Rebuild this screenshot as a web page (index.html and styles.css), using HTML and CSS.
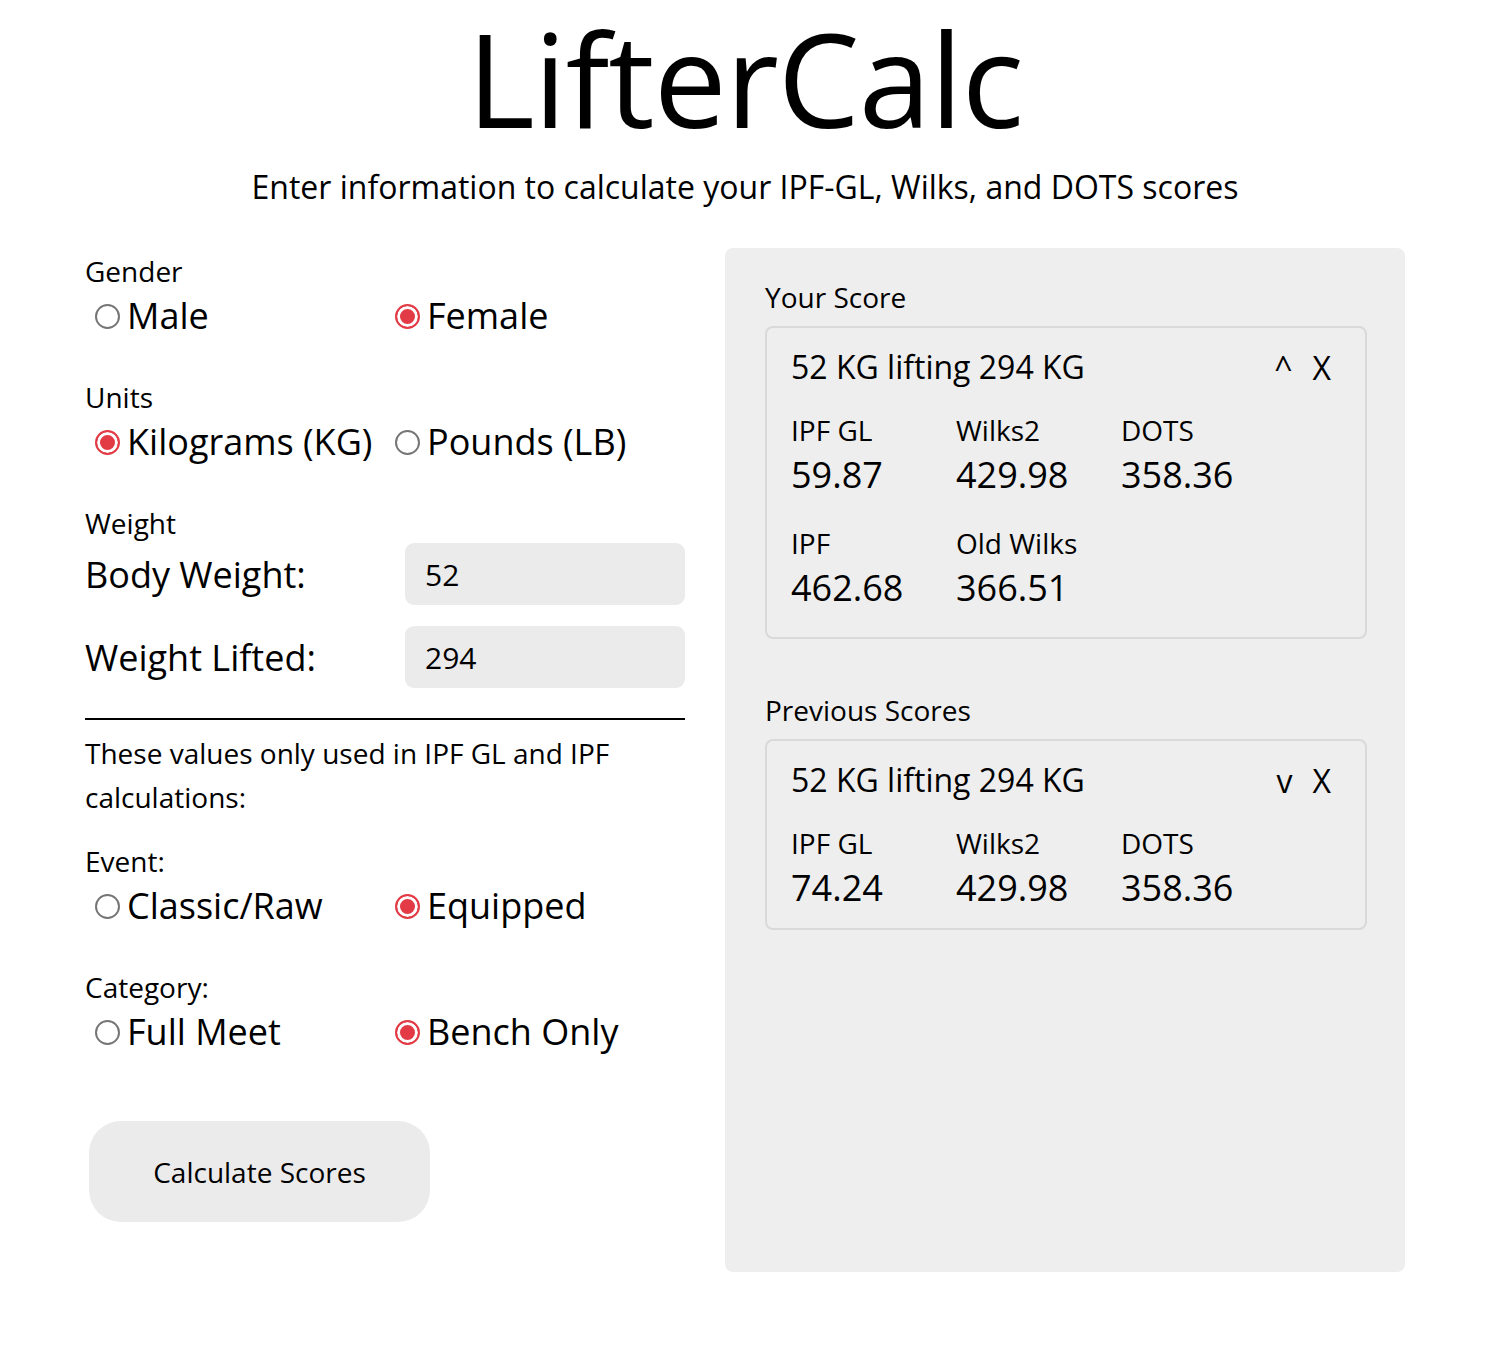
FILE: index.html
```html
<!DOCTYPE html>
<html>
<head>
<meta charset="utf-8">
<title>LifterCalc</title>
<link rel="stylesheet" href="styles.css">
</head>
<body>
<header class="header">
  <h1 class="title">LifterCalc</h1>
  <p class="subtitle">Enter information to calculate your IPF-GL, Wilks, and DOTS scores</p>
</header>
<main class="main">
  <form class="form">
    <div class="group">
      <div class="label">Gender</div>
      <div class="options">
        <label class="opt"><input type="radio" name="g"><span>Male</span></label>
        <label class="opt"><input type="radio" name="g" checked><span>Female</span></label>
      </div>
    </div>
    <div class="group">
      <div class="label">Units</div>
      <div class="options">
        <label class="opt"><input type="radio" name="u" checked><span>Kilograms (KG)</span></label>
        <label class="opt"><input type="radio" name="u"><span>Pounds (LB)</span></label>
      </div>
    </div>
    <div class="group weight">
      <div class="label">Weight</div>
      <div class="field">
        <span class="field-label">Body Weight:</span>
        <input class="input" type="text" value="52">
      </div>
      <div class="field">
        <span class="field-label">Weight Lifted:</span>
        <input class="input" type="text" value="294">
      </div>
    </div>
    <hr class="rule">
    <p class="note">These values only used in IPF GL and IPF calculations:</p>
    <div class="group">
      <div class="label">Event:</div>
      <div class="options">
        <label class="opt"><input type="radio" name="e"><span>Classic/Raw</span></label>
        <label class="opt"><input type="radio" name="e" checked><span>Equipped</span></label>
      </div>
    </div>
    <div class="group">
      <div class="label">Category:</div>
      <div class="options">
        <label class="opt"><input type="radio" name="c"><span>Full Meet</span></label>
        <label class="opt"><input type="radio" name="c" checked><span>Bench Only</span></label>
      </div>
    </div>
    <button class="btn" type="button">Calculate Scores</button>
  </form>
  <section class="panel">
    <div class="section-label">Your Score</div>
    <div class="card current">
      <div class="card-head">
        <span class="card-title">52 KG lifting 294 KG</span>
        <span class="card-actions"><span class="act">^</span><span class="act">X</span></span>
      </div>
      <div class="scores">
        <div class="score"><div class="s-label">IPF GL</div><div class="s-value">59.87</div></div>
        <div class="score"><div class="s-label">Wilks2</div><div class="s-value">429.98</div></div>
        <div class="score"><div class="s-label">DOTS</div><div class="s-value">358.36</div></div>
        <div class="score"><div class="s-label">IPF</div><div class="s-value">462.68</div></div>
        <div class="score"><div class="s-label">Old Wilks</div><div class="s-value">366.51</div></div>
      </div>
    </div>
    <div class="section-label prev">Previous Scores</div>
    <div class="card">
      <div class="card-head">
        <span class="card-title">52 KG lifting 294 KG</span>
        <span class="card-actions"><span class="act">v</span><span class="act">X</span></span>
      </div>
      <div class="scores">
        <div class="score"><div class="s-label">IPF GL</div><div class="s-value">74.24</div></div>
        <div class="score"><div class="s-label">Wilks2</div><div class="s-value">429.98</div></div>
        <div class="score"><div class="s-label">DOTS</div><div class="s-value">358.36</div></div>
      </div>
    </div>
  </section>
</main>
</body>
</html>
```
FILE: styles.css
```css
* { box-sizing: border-box; }
html, body { margin: 0; padding: 0; background: #fff; }
body {
  font-family: "Open Sans", "Noto Sans", sans-serif;
  color: #000;
}
.header { text-align: center; padding-right: 10px; }
.title {
  font-size: 130px;
  font-weight: 400;
  line-height: 150px;
  letter-spacing: -1px;
  margin: 0;
  padding-top: 3px;
}
.subtitle {
  font-size: 32px;
  margin: 11px 0 0;
  line-height: 45px;
}
.main {
  display: flex;
  gap: 40px;
  padding: 0 95px 0 85px;
  margin-top: 39px;
  align-items: flex-start;
}
.form { width: 600px; flex: none; padding-top: 4px; }
.group { margin-bottom: 37px; }
.label { font-size: 28px; line-height: 38px; margin-bottom: 1px; }
.options {
  display: grid;
  grid-template-columns: 300px 300px;
}
.opt {
  display: flex;
  align-items: center;
  gap: 7px;
  font-size: 36px;
  line-height: 50px;
  padding-left: 10px;
}
.opt input {
  -webkit-appearance: none;
  appearance: none;
  width: 25px;
  height: 25px;
  margin: 0;
  border: 2px solid #767676;
  border-radius: 50%;
  background: #fff;
  flex: none;
}
.opt input:checked {
  border: 2px solid #e23b45;
  background: #e23b45;
  box-shadow: inset 0 0 0 3px #fff;
}
.weight { margin-bottom: 30px; }
.field {
  display: flex;
  align-items: center;
  justify-content: space-between;
  margin-top: 0;
  margin-bottom: 21px;
}
.field:last-child { margin-bottom: 0; }
.field-label { font-size: 36px; }
.input {
  width: 280px;
  height: 62px;
  border: none;
  border-radius: 9px;
  background: #ebebeb;
  font-family: inherit;
  font-size: 30px;
  padding: 0 20px;
  color: #000;
  outline: none;
}
.rule {
  border: none;
  border-top: 2px solid #000;
  margin: 0 0 11px;
}
.note {
  font-size: 28px;
  line-height: 44px;
  margin: 0 0 23px;
}
.btn {
  display: block;
  margin: 64px 0 0 4px;
  width: 341px;
  height: 101px;
  border: none;
  border-radius: 32px;
  background: #ebebeb;
  font-family: inherit;
  font-size: 28px;
  color: #000;
}
.panel {
  width: 680px;
  flex: none;
  background: #eeeeee;
  border-radius: 8px;
  padding: 29px 38px 0 40px;
  height: 1024px;
}
.section-label { font-size: 28px; line-height: 40px; margin-bottom: 9px; }
.section-label.prev { margin-top: 51px; }
.card {
  border: 2px solid #d9d9d9;
  border-radius: 8px;
  padding: 15px 24px 14px 24px;
}
.card.current { padding-bottom: 23px; }
.card-head {
  display: flex;
  justify-content: space-between;
  align-items: center;
}
.card-title { font-size: 32px; line-height: 48px; }
.card-actions { display: flex; gap: 20px; font-size: 32px; padding-right: 10px; }
.scores {
  display: grid;
  grid-template-columns: 165px 165px 165px;
  row-gap: 23px;
  margin-top: 20px;
}
.s-label { font-size: 28px; line-height: 38px; }
.s-value { font-size: 36px; line-height: 52px; }
```
